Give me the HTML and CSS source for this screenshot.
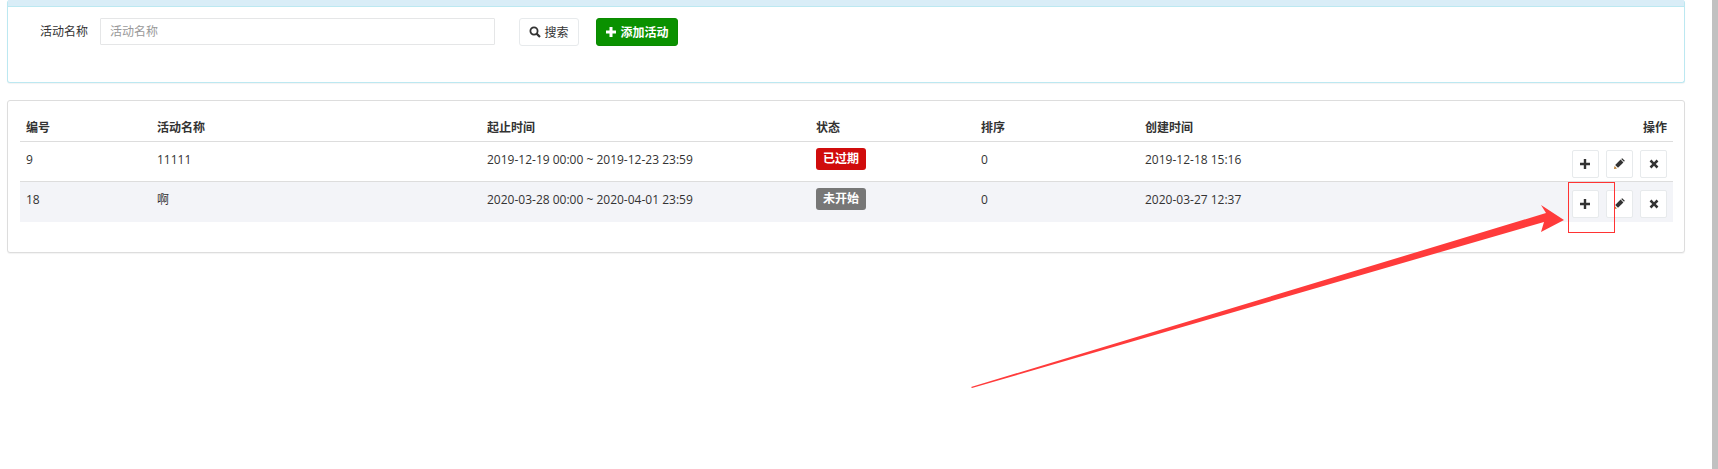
FILE: index.html
```html
<!DOCTYPE html>
<html lang="en">
  <head>
    <meta charset="UTF-8" />
    <title>活动列表</title>
    <link rel="stylesheet" href="styles.css">
  </head>
  <body>
    <div class="page">
      <div class="panel panel-search">
        <div class="panel-head"></div>
        <form class="search-form">
          <label class="search-label">活动名称</label>
          <input class="search-input" type="text" placeholder="活动名称">
          <button class="btn btn-search" type="button">
            <svg class="icon" viewBox="0 0 12 12"><circle cx="5" cy="5" r="3.6" fill="none" stroke="currentColor" stroke-width="1.8"/><path d="M7.6 7.6 11 11" stroke="currentColor" stroke-width="2.2"/></svg>
            搜索
          </button>
          <button class="btn btn-add" type="button">
            <svg class="icon" viewBox="0 0 12 12"><path d="M4.5 1h3v3.5H11v3H7.5V11h-3V7.5H1v-3h3.5z" fill="currentColor"/></svg>
            添加活动
          </button>
        </form>
      </div>

      <div class="panel panel-list">
        <table class="list">
          <thead>
            <tr>
              <th class="col-id">编号</th>
              <th class="col-name">活动名称</th>
              <th class="col-time">起止时间</th>
              <th class="col-state">状态</th>
              <th class="col-sort">排序</th>
              <th class="col-created">创建时间</th>
              <th class="col-ops">操作</th>
            </tr>
          </thead>
          <tbody>
            <tr>
              <td>9</td>
              <td>11111</td>
              <td>2019-12-19 00:00 ~ 2019-12-23 23:59</td>
              <td><span class="tag tag-expired">已过期</span></td>
              <td>0</td>
              <td>2019-12-18 15:16</td>
              <td class="ops">
                <button class="btn-op" type="button"><svg class="icon" viewBox="0 0 12 12"><use href="#i-plus"/></svg></button>
                <button class="btn-op" type="button"><svg class="icon" viewBox="0 0 12 12"><use href="#i-pencil"/></svg></button>
                <button class="btn-op" type="button"><svg class="icon" viewBox="0 0 12 12"><use href="#i-remove"/></svg></button>
              </td>
            </tr>
            <tr class="row-alt">
              <td>18</td>
              <td>啊</td>
              <td>2020-03-28 00:00 ~ 2020-04-01 23:59</td>
              <td><span class="tag tag-pending">未开始</span></td>
              <td>0</td>
              <td>2020-03-27 12:37</td>
              <td class="ops">
                <button class="btn-op" type="button"><svg class="icon" viewBox="0 0 12 12"><use href="#i-plus"/></svg></button>
                <button class="btn-op" type="button"><svg class="icon" viewBox="0 0 12 12"><use href="#i-pencil"/></svg></button>
                <button class="btn-op" type="button"><svg class="icon" viewBox="0 0 12 12"><use href="#i-remove"/></svg></button>
              </td>
            </tr>
          </tbody>
        </table>
      </div>
    </div>

    <svg class="defs" width="0" height="0">
      <symbol id="i-plus" viewBox="0 0 12 12"><path d="M4.8 1h2.4v3.8H11v2.4H7.2V11H4.8V7.2H1V4.8h3.8z" fill="currentColor"/></symbol>
      <symbol id="i-pencil" viewBox="0 0 12 12"><path d="M1 11l.6-3 2.4 2.4z" fill="#b8792c"/><path d="M2.2 7 7.6 1.6 10.4 4.4 5 9.8z" fill="currentColor"/><path d="M8.2 1 9.2.2 11.8 2.8 11 3.8z" fill="currentColor"/></symbol>
      <symbol id="i-remove" viewBox="0 0 12 12"><path d="M1.6 3.4 3.4 1.6 6 4.2 8.6 1.6l1.8 1.8L7.8 6l2.6 2.6-1.8 1.8L6 7.8l-2.6 2.6-1.8-1.8L4.2 6z" fill="currentColor"/></symbol>
    </svg>

    <!-- annotation drawn over the screenshot -->
    <div class="mark-box"></div>
    <svg class="mark-arrow" width="1718" height="469" viewBox="0 0 1718 469">
      <path d="M971 387 1546 213 1541 205 1564 220 1541 232 1544 222 972 388z" fill="#ff3b3b"/>
    </svg>
  </body>
</html>
```
FILE: styles.css
```css
body {
  margin: 0;
  padding: 0;
  height: 469px;
  overflow: hidden;
  background: #fff;
  color: #333;
  font-family: "Open Sans", "Noto Sans CJK SC", sans-serif;
  font-size: 12px;
}

.page {
  width: 1712px;
  height: 469px;
  padding: 0 27px 0 7px;
  box-sizing: border-box;
}

.panel {
  background: #fff;
  border: 1px solid #ddd;
  border-radius: 3px;
  box-shadow: 0 1px 1px rgba(0, 0, 0, 0.05);
}

.panel-search {
  height: 83px;
  box-sizing: border-box;
  border-color: #bce8f1;
  border-top: 0;
}

.panel-head {
  height: 6px;
  background: #d9edf7;
  border-bottom: 1px solid #bce8f1;
}

.search-form {
  display: flex;
  align-items: flex-start;
  padding: 11px 0 0 32px;
}

.search-label {
  width: 48px;
  height: 27px;
  line-height: 27px;
  margin-right: 12px;
}

.search-input {
  width: 395px;
  height: 27px;
  box-sizing: border-box;
  padding: 0 9px;
  margin-right: 24px;
  border: 1px solid #e5e6e7;
  border-radius: 1px;
  outline: 0;
  font: inherit;
}

.search-input::placeholder {
  color: #999;
}

.btn {
  display: flex;
  align-items: center;
  justify-content: center;
  gap: 3px;
  height: 28px;
  padding: 0;
  border: 1px solid #e7eaec;
  border-radius: 3px;
  background: #fff;
  color: #333;
  font: inherit;
}

.btn-search {
  width: 60px;
  margin-right: 17px;
}

.btn-add {
  width: 82px;
  background: #0a9100;
  border-color: #0a8a00;
  color: #fff;
  font-weight: 600;
}

.icon {
  width: 12px;
  height: 12px;
  flex: none;
}

.panel-list {
  height: 153px;
  box-sizing: border-box;
  margin-top: 17px;
  padding: 11px 11px 0 12px;
}

.list {
  width: 100%;
  border-collapse: collapse;
  table-layout: fixed;
}

.list th {
  height: 29px;
  padding: 0 6px;
  border-bottom: 1px solid #ddd;
  text-align: left;
  font-weight: 600;
}

.list td {
  height: 40px;
  padding: 0 6px 5px;
  box-sizing: border-box;
  border-bottom: 1px solid #ddd;
  vertical-align: middle;
}

.list tr:last-child td {
  border-bottom: 0;
}

.row-alt td {
  background: #f3f4f8;
}

.col-id { width: 119px; }
.col-name { width: 318px; }
.col-time { width: 317px; }
.col-state { width: 153px; padding-left: 0; }
.col-sort { width: 152px; }
.col-created { width: 300px; }
.list th.col-ops { text-align: right; }

.tag {
  display: inline-block;
  width: 50px;
  height: 22px;
  line-height: 22px;
  margin-left: 0;
  border-radius: 3px;
  color: #fff;
  font-weight: 700;
  text-align: center;
}

.tag-expired { background: #d00c0c; }
.tag-pending { background: #777; }

.ops {
  padding: 6px 6px 0;
  text-align: right;
  white-space: nowrap;
}

.list td.ops {
  padding: 5px 6px 0;
}

.btn-op {
  display: inline-flex;
  align-items: center;
  justify-content: center;
  width: 27px;
  height: 28px;
  padding: 0;
  margin-left: 4px;
  border: 1px solid #e7eaec;
  border-radius: 2px;
  background: #fff;
  color: #333;
}

.defs {
  position: absolute;
}

.mark-box {
  position: absolute;
  left: 1568px;
  top: 182px;
  width: 45px;
  height: 49px;
  border: 1px solid #f33;
}

.mark-arrow {
  position: absolute;
  left: 0;
  top: 0;
  pointer-events: none;
}

html {
  background: #fff;
}

body::after {
  content: "";
  position: absolute;
  right: 0;
  top: 0;
  width: 6px;
  height: 469px;
  background: #c1c1c1;
}
```
